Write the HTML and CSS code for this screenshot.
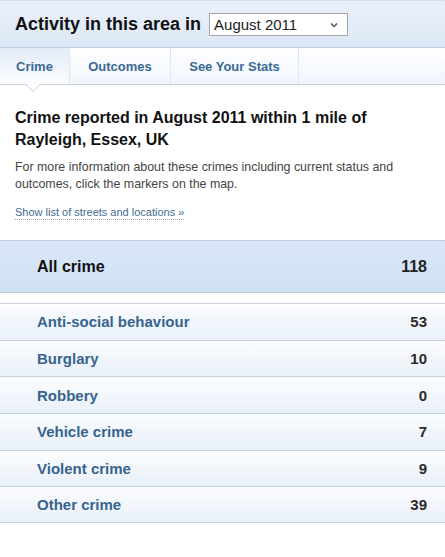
FILE: index.html
```html
<!DOCTYPE html>
<html>
<head>
<meta charset="utf-8">
<link rel="stylesheet" href="styles.css">
</head>
<body>
<div class="panel">
  <div class="head">
    <h1 class="title">Activity in this area in</h1>
    <div class="select"><span>August 2011</span><svg class="chev" width="8" height="6" viewBox="0 0 8 6"><path d="M1 1.5 L4 4.5 L7 1.5" fill="none" stroke="#555" stroke-width="1.5"/></svg></div>
  </div>
  <div class="tabs">
    <div class="tab active">Crime<span class="arrow"></span></div>
    <div class="tab">Outcomes</div>
    <div class="tab">See Your Stats</div>
    <div class="tab-rest"></div>
  </div>
  <div class="intro">
    <h2 class="subtitle">Crime reported in August 2011 within 1 mile of Rayleigh, Essex, UK</h2>
    <p class="desc">For more information about these crimes including current status and outcomes, click the markers on the map.</p>
    <a class="link">Show list of streets and locations »</a>
  </div>
  <div class="total"><span>All crime</span><span>118</span></div>
  <div class="list">
    <div class="row"><span class="name">Anti-social behaviour</span><span class="num">53</span></div>
    <div class="row"><span class="name">Burglary</span><span class="num">10</span></div>
    <div class="row"><span class="name">Robbery</span><span class="num">0</span></div>
    <div class="row"><span class="name">Vehicle crime</span><span class="num">7</span></div>
    <div class="row"><span class="name">Violent crime</span><span class="num">9</span></div>
    <div class="row"><span class="name">Other crime</span><span class="num">39</span></div>
  </div>
</div>
</body>
</html>
```
FILE: styles.css
```css
html, body { margin: 0; padding: 0; background: #fff; }
body { font-family: "Liberation Sans", Arial, sans-serif; color: #111; }
.panel { width: 445px; }
.head {
  display: flex; align-items: center; gap: 8px;
  height: 47px; padding: 0 0 0 15px;
  border-top: 1px solid #d7e0ea;
  background: linear-gradient(#e9f0fa, #dde8f6);
  box-sizing: border-box;
}
.title { margin: 0; font-size: 18px; font-weight: bold; color: #111; }
.select {
  width: 139px; height: 23px; box-sizing: border-box;
  border: 1px solid #a6a6a6; background: #fff;
  display: flex; align-items: center; justify-content: space-between;
  padding: 0 9px 0 4px; font-size: 15px; color: #222;
}
.chev { margin-top: 1px; }
.tabs {
  display: flex; height: 38px; box-sizing: border-box;
  border-top: 1px solid #c7d0da; border-bottom: 1px solid #c7d0da;
  background: linear-gradient(#fdfeff, #f0f4fb);
}
.tab {
  position: relative;
  display: flex; align-items: center; justify-content: center;
  font-size: 13px; font-weight: bold; color: #3b6a93;
  border-right: 1px solid #e1e6ec;
}
.tab:nth-child(1) { width: 69px; }
.tab:nth-child(2) { width: 100px; }
.tab:nth-child(3) { width: 127px; }
.tab.active { background: linear-gradient(#e3ecf8, #fbfcfe); border-right-color: #dfe6ee; }
.tab-rest { flex: 1; }
.arrow {
  position: absolute; left: 28px; bottom: -6px;
  width: 9px; height: 9px; background: #fff;
  border-right: 1px solid #d3dae2; border-bottom: 1px solid #d3dae2;
  transform: rotate(45deg);
}
.intro { padding: 22px 15px 0 15px; height: 155px; box-sizing: border-box; }
.subtitle { margin: 0; font-size: 16px; font-weight: bold; line-height: 22px; color: #111; }
.desc { margin: 8px 0 0 0; font-size: 12.4px; line-height: 17px; color: #444; }
.link {
  display: inline-block; margin-top: 12px;
  font-size: 11px; color: #3f6c91; line-height: 14px;
  border-bottom: 1px dotted #8aa4bd;
}
.total {
  display: flex; justify-content: space-between; align-items: center;
  height: 53px; box-sizing: border-box; padding: 0 18px 0 37px;
  border-top: 1px solid #c0cede; border-bottom: 1px solid #c0cede;
  background: linear-gradient(#dae7f8, #cfe0f5);
  font-size: 16px; font-weight: bold; color: #111;
}
.total span:last-child { color: #222; }
.list { margin-top: 10px; }
.row {
  display: flex; justify-content: space-between; align-items: center;
  height: 36.7px; box-sizing: border-box; padding: 0 18px 0 37px;
  border-top: 1px solid #c6d2de;
  background: linear-gradient(#fbfcfe, #e9f0f9);
  font-size: 15px; font-weight: bold;
}
.row:last-child { border-bottom: 1px solid #c6d2de; }
.name { color: #36648f; }
.num { color: #2a2a2a; }
```
